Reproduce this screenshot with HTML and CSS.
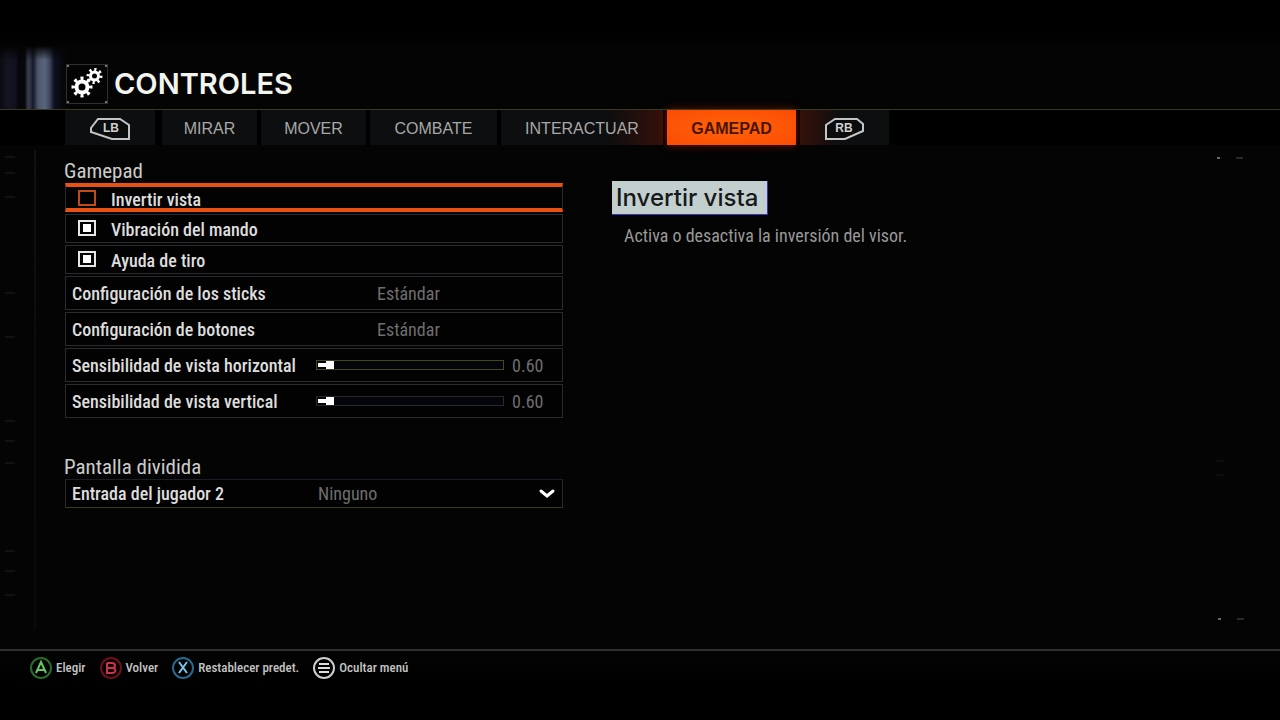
FILE: index.html
```html
<!DOCTYPE html>
<html lang="es">
<head>
<meta charset="utf-8">
<meta name="viewport" content="width=device-width, initial-scale=1">
<title>Controles</title>
<link rel="stylesheet" href="styles.css">
</head>
<body>
<div class="screen">
  <div class="glow" aria-hidden="true"></div>
  <div class="rail" aria-hidden="true"></div>
  <svg class="marks" width="12" height="450" aria-hidden="true">
    <path d="M2 2h10M2 18h10M2 42h10M2 138h10M2 182h10M2 266h10M2 286h10M2 308h10M2 396h10M2 416h10M2 440h10" stroke="#121214" stroke-width="2"/>
  </svg>
  <svg class="ticks" width="30" height="470" aria-hidden="true">
    <path d="M2 3h3M3 464h3" stroke="#666" stroke-width="2"/>
    <path d="M21 3h7M22 464h7" stroke="#2a2a2a" stroke-width="2"/>
    <path d="M1 306h8M1 320h8" stroke="#161616"/>
  </svg>

  <header class="header">
    <span class="header-icon">
      <svg width="40" height="38" viewBox="0 0 40 38" aria-hidden="true">
        <g fill="none" stroke="#fff">
          <circle cx="15" cy="22" r="5.500" stroke-width="4"/>
          <circle cx="15" cy="22" r="8.500" stroke-width="4" pathLength="16" stroke-dasharray="0.9 1.1" stroke-dashoffset="0.45"/>
          <circle cx="27.500" cy="11" r="4" stroke-width="3"/>
          <circle cx="27.500" cy="11" r="6.500" stroke-width="3" pathLength="16" stroke-dasharray="0.9 1.1" stroke-dashoffset="0.1"/>
        </g>
        <path d="M0 0h2v2H0zM38 0h2v2h-2zM0 36h2v2H0zM38 36h2v2h-2z" fill="#777"/>
      </svg>
    </span>
    <h1 class="title">CONTROLES</h1>
  </header>

  <nav class="tabs" aria-label="Secciones">
    <button class="tab tab-first" type="button" aria-label="LB">
      <svg width="41" height="22" viewBox="0 0 41 22">
        <path d="M8 1H30L39 7V21H22L1 14V10Z" fill="#0b0c0d" stroke="#c4c4c4" stroke-width="2"/>
        <text class="bumper" x="21" y="14">LB</text>
      </svg>
    </button>
    <button class="tab" type="button">MIRAR</button>
    <button class="tab" type="button">MOVER</button>
    <button class="tab" type="button">COMBATE</button>
    <button class="tab tab-before" type="button">INTERACTUAR</button>
    <button class="tab tab-active" type="button" aria-current="page">GAMEPAD</button>
    <button class="tab tab-after" type="button" aria-label="RB">
      <svg width="41" height="22" viewBox="0 0 41 22">
        <path d="M11 1H33L39 6V13L21 21H2V7Z" fill="#0b0c0d" stroke="#c4c4c4" stroke-width="2"/>
        <text class="bumper" x="20" y="14">RB</text>
      </svg>
    </button>
  </nav>

  <main class="content">
    <form class="settings">
      <section class="group">
        <h2 class="group-title">Gamepad</h2>
        <div class="rows">
          <label class="row check-row row-selected"><input class="check" type="checkbox">Invertir vista</label>
          <label class="row check-row"><input class="check" type="checkbox" checked>Vibración del mando</label>
          <label class="row check-row"><input class="check" type="checkbox" checked>Ayuda de tiro</label>
          <button class="row option-row" type="button"><span>Configuración de los sticks</span><span class="value">Estándar</span></button>
          <button class="row option-row" type="button"><span>Configuración de botones</span><span class="value">Estándar</span></button>
          <div class="row slider-row">
            <label for="sens-h">Sensibilidad de vista horizontal</label>
            <input class="slider slider-olive" id="sens-h" type="range" min="0" max="12" step="0.1" value="0.6">
            <output class="value" for="sens-h">0.60</output>
          </div>
          <div class="row slider-row">
            <label for="sens-v">Sensibilidad de vista vertical</label>
            <input class="slider" id="sens-v" type="range" min="0" max="12" step="0.1" value="0.6">
            <output class="value" for="sens-v">0.60</output>
          </div>
        </div>
      </section>
      <section class="group">
        <h2 class="group-title">Pantalla dividida</h2>
        <div class="row select-row">
          <label for="player2">Entrada del jugador 2</label>
          <select class="select" id="player2"><option>Ninguno</option></select>
          <svg class="chevron" width="18" height="12" viewBox="0 0 18 12" aria-hidden="true"><path d="M3 3L9 8L15 3" fill="none" stroke="#fff" stroke-width="3" stroke-linecap="round"/></svg>
        </div>
      </section>
    </form>
    <aside class="detail">
      <h2 class="detail-title">Invertir vista</h2>
      <p class="detail-text">Activa o desactiva la inversión del visor.</p>
    </aside>
  </main>

  <footer class="footer">
    <button class="hint" type="button"><svg width="22" height="22" viewBox="0 0 22 22" aria-hidden="true"><circle cx="11" cy="11" r="10" fill="none" stroke="#2b6b29" stroke-width="2"/><path d="M6 16L11 5L16 16M8 13H14" fill="none" stroke="#67c760" stroke-width="2"/></svg>Elegir</button>
    <button class="hint" type="button"><svg width="22" height="22" viewBox="0 0 22 22" aria-hidden="true"><circle cx="11" cy="11" r="10" fill="none" stroke="#6f0e1f" stroke-width="2"/><path d="M7 6H12C16 6 16 11 12 11H7M12 11C17 11 16 16 12 16H7V6" fill="none" stroke="#d22f4c" stroke-width="2"/></svg>Volver</button>
    <button class="hint" type="button"><svg width="22" height="22" viewBox="0 0 22 22" aria-hidden="true"><circle cx="11" cy="11" r="10" fill="none" stroke="#27698c" stroke-width="2"/><path d="M7 5L15 16M15 5L7 16" fill="none" stroke="#7cc4ea" stroke-width="2"/></svg>Restablecer predet.</button>
    <button class="hint" type="button"><svg width="22" height="22" viewBox="0 0 22 22" aria-hidden="true"><circle cx="11" cy="11" r="10" fill="none" stroke="#ccc" stroke-width="2"/><path d="M6 7H16M5 11H17M6 15H16" stroke="#ddd" stroke-width="2"/></svg>Ocultar menú</button>
  </footer>
</div>
</body>
</html>
```
FILE: styles.css
```css
* { box-sizing: border-box; }

body {
  margin: 0;
  background: #020202;
  color: #ddd;
  font-family: "Roboto Condensed", "Liberation Sans Narrow", "Liberation Sans", sans-serif;
  font-size: 18px;
}

button, input, select {
  margin: 0;
  border: 0;
  background: none;
  color: inherit;
  font: inherit;
}

h1, h2, p { margin: 0; }

.screen {
  position: relative;
  display: flex;
  flex-direction: column;
  min-height: 100vh;
  background: linear-gradient(#000 36px, #040404 48px, #040404 calc(100% - 70px), #000 calc(100% - 40px));
}

.glow {
  position: absolute;
  top: 46px;
  left: 0;
  width: 72px;
  height: 63px;
  background: linear-gradient(90deg, #0a0a14 0, #15151f 8px, #111122 15px, #050509 19px, #08080d 25px, #3b3e50 28px, #2b2d40 31px, #151725 33px, #4d566c 38px, #5a657c 45px, #3b4359 50px, #0f1022 54px, #08080d 62px, transparent 72px);
  -webkit-mask-image: linear-gradient(transparent, #000 14px);
  mask-image: linear-gradient(transparent, #000 14px);
}

.rail {
  position: absolute;
  top: 150px;
  left: 34px;
  width: 2px;
  height: 480px;
  background: linear-gradient(#101014, #0c0c0c 40%, #0a0a0a);
}

.marks {
  position: absolute;
  top: 155px;
  left: 3px;
}

.ticks {
  position: absolute;
  top: 155px;
  right: 35px;
}

.header {
  position: relative;
  display: flex;
  align-items: center;
  gap: 6px;
  padding: 64px 64px 5px 66px;
  border-bottom: 1px solid #3a3b1e;
}

.header-icon {
  display: flex;
  border: 1px solid #33302c;
  background: #040404;
}

.title {
  color: #f2f4ee;
  font: 600 29px/40px Inter, sans-serif;
}

.tabs {
  display: grid;
  grid-template-columns: 93px 95px 105px 127px 162px 129px 89px;
  gap: 4px;
  height: 35px;
  padding: 0 65px;
  background: #000;
}

.tab {
  display: flex;
  align-items: center;
  justify-content: center;
  padding: 2px 0 0;
  background: #0c0e0f;
  color: #a8a8a8;
  font: 16px/20px "Liberation Sans", sans-serif;
}

.tab-first { margin-right: 3px; }
.tab-before { background: linear-gradient(90deg, #0c0e0f 65%, #35100a); }
.tab-after { background: linear-gradient(90deg, #35100a, #0c0e0f 45%); }

.tab-active {
  background: radial-gradient(#ff6408, #fb4b05);
  color: #4a1402;
  font-weight: 700;
  box-shadow: 0 0 8px #7a1c04;
}

.bumper {
  fill: #d0d0d0;
  font: 700 12px "Liberation Sans", sans-serif;
  text-anchor: middle;
}

.content {
  flex: 1;
  display: grid;
  grid-template-columns: minmax(0, 498px) minmax(0, 1fr);
  gap: 49px;
  padding: 14px 65px;
}

.settings {
  display: flex;
  flex-direction: column;
  gap: 37px;
}

.group-title {
  margin-left: -1px;
  color: #ccc;
  font-size: 21px;
  font-weight: 400;
  line-height: 24px;
}

.rows {
  display: flex;
  flex-direction: column;
  gap: 2px;
}

.row {
  display: grid;
  align-items: center;
  height: 34px;
  padding: 0 6px;
  border: 1px solid #2a2a2e;
  background: #020203;
  font-weight: 500;
  text-align: left;
}

.check-row {
  grid-template-columns: 18px 1fr;
  gap: 15px;
  height: 29px;
  padding: 2px 12px 0;
}

.row-selected {
  border-top: 4px solid #e85112;
  border-bottom: 4px solid #e85112;
}

.check {
  appearance: none;
  align-self: start;
  width: 18px;
  height: 16px;
  margin-top: 3px;
  border: 2px solid #e6e6e6;
}

.row-selected .check {
  margin-top: 1px;
  border-color: #c14a1a;
}

.check:checked {
  background: linear-gradient(#fff, #fff) center / 8px 8px no-repeat;
}

.option-row { grid-template-columns: 305px 1fr; }

.value {
  color: #6e6e6e;
  font-weight: 400;
}

.slider-row { grid-template-columns: 244px 188px 1fr; }

.slider-row .value { padding-left: 8px; }

.slider {
  appearance: none;
  width: 100%;
  height: 10px;
  border: 1px solid #29292d;
  background: linear-gradient(#fff, #fff) 1px center / 8px 4px no-repeat #04040b;
}

.slider-olive { border-color: #45471e; }

.slider::-webkit-slider-thumb {
  appearance: none;
  width: 8px;
  height: 8px;
  background: #fff;
}

.select-row {
  position: relative;
  grid-template-columns: 246px 1fr;
  height: 29px;
  border-color: #1d1d28 #29292b #38391e;
}

.select {
  appearance: none;
  width: 100%;
  padding: 0;
  color: #6e6e6e;
  font-weight: 400;
}

.chevron {
  position: absolute;
  top: 8px;
  right: 6px;
  pointer-events: none;
}

.detail { padding-top: 22px; }

.detail-title {
  width: fit-content;
  padding: 2px 9px 1px 4px;
  background: #c3cece;
  border: solid #3c35b0;
  border-width: 0 1px 1px 0;
  color: #15191a;
  font: 500 24px/30px Inter, sans-serif;
}

.detail-text {
  padding: 10px 12px;
  color: #999;
  line-height: 22px;
}

.footer {
  display: flex;
  align-items: flex-start;
  gap: 14px;
  height: 71px;
  padding: 6px 30px;
  border-top: 2px solid #303030;
}

.hint {
  display: flex;
  align-items: center;
  gap: 4px;
  padding: 0;
  color: #c4c4c4;
  font-size: 13px;
  font-weight: 500;
  line-height: 22px;
}
```
